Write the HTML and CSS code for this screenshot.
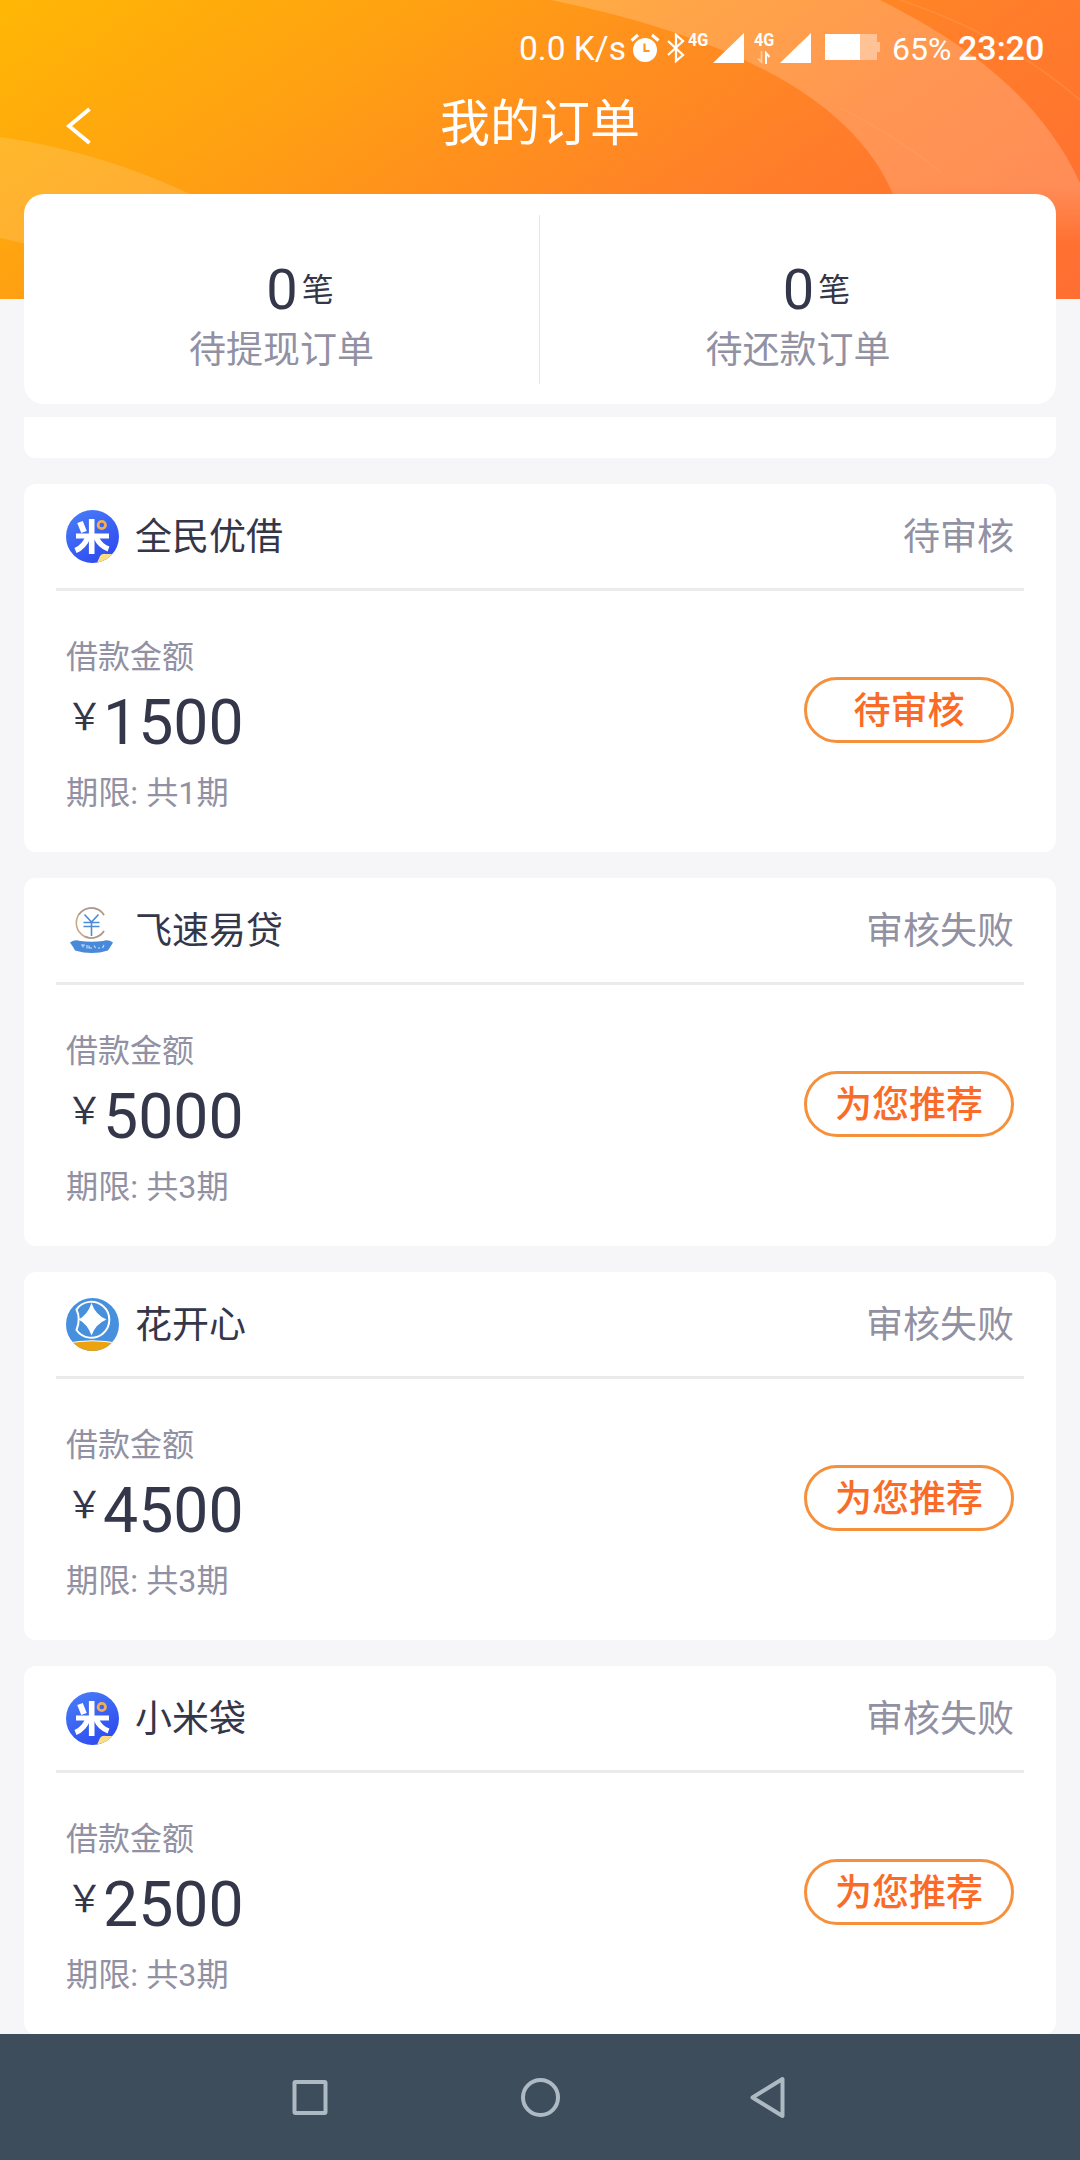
FILE: index.html
```
<!DOCTYPE html>
<html lang="zh-CN">
<head>
<meta charset="utf-8">
<title>我的订单</title>
<link rel="stylesheet" href="styles.css">
</head>
<body>
<svg class="sprite" aria-hidden="true">
  <defs>
    <linearGradient id="mi-blue" x1="0" y1="0" x2="0.6" y2="1">
      <stop offset="0" stop-color="#4a80f8"/><stop offset="1" stop-color="#2f4cf0"/>
    </linearGradient>
    <clipPath id="disc"><circle cx="26.5" cy="26.5" r="26.5"/></clipPath>
    <symbol id="logo-mi" viewBox="0 0 53 53">
      <g clip-path="url(#disc)">
        <rect width="53" height="53" fill="url(#mi-blue)"/>
        <path d="M30 55 34 46Q36 43 40 44L55 44V55Z" fill="#f8de85"/>
        <g fill="none" stroke="#fff">
          <path d="M25.7 9V44" stroke-width="5.6"/>
          <path d="M10 26H43" stroke-width="5"/>
          <path d="M14 12 18 22" stroke-width="6"/>
          <path d="M22 27Q18 37 9.500 40.500M30 27Q34 36 42.500 39" stroke-width="5.400"/>
        </g>
        <circle cx="35.800" cy="15" r="3.700" fill="none" stroke="#efad55" stroke-width="2.800"/>
      </g>
    </symbol>
    <symbol id="logo-fei" viewBox="0 0 53 53">
      <g transform="translate(0 2.500)">
      <path d="M38 8.500A15 15 0 1 0 38 24.500" fill="none" stroke="#c9a888" stroke-width="1.600"/>
      <path d="M13 8A15 15 0 0 1 38 8.500M38 24.500A15 15 0 0 1 19 30" fill="none" stroke="#a99a94" stroke-width="1.400"/>
      <path d="M18.500 8 25.500 15.500 32.500 8M17.500 16H33.500M17.500 20H33.500M25.500 15V29.500" fill="none" stroke="#4b8bd8" stroke-width="1.600"/>
      <path d="M4 36Q9 32.500 14 34.500Q26 36 37 34.500Q42 32.500 47 36Q44 41 42 44Q26 49 9 44Q7 40 4 36Z" fill="#4889d9"/>
      <path d="M15 38.500H19M17 38.500V41M21 38.500V42M23 39V41.500H26M28 39 29.500 41.500M32 41.500H34M36.500 41.500 38 38.500" fill="none" stroke="#cfe2fb" stroke-width="1.100"/>
      </g>
    </symbol>
    <symbol id="logo-hua" viewBox="0 0 53 53">
      <g clip-path="url(#disc)">
        <rect width="53" height="53" fill="#4690de"/>
        <path d="M0 45.500Q26 40 53 45.500V55H0Z" fill="#eba40f" stroke="#fff" stroke-width="1.200"/>
        <path d="M10.500 11.500A18 18 0 1 1 10.500 32Q15 21 10.500 11.500Z" fill="none" stroke="#fff" stroke-width="2"/>
        <path d="M25.500 5Q29.500 17 40.500 21.500Q29.500 26 25.500 37.500Q21.500 26 12.500 21.500Q21.500 17 25.500 5Z" fill="#fff"/>
      </g>
    </symbol>
  </defs>
</svg>
<div class="screen">
  <header class="hero">
    <svg class="hero-art" viewBox="0 0 1080 299" aria-hidden="true">
      <defs>
        <linearGradient id="band" gradientUnits="userSpaceOnUse" x1="0" y1="185" x2="0" y2="245">
          <stop offset="0" stop-color="#fff" stop-opacity=".19"/><stop offset="1" stop-color="#fff" stop-opacity="0"/>
        </linearGradient>
      </defs>
      <path d="M551 0C745 40 855 105 893 194V299H1080V183C1040 95 960 40 880 0Z" fill="url(#band)"/>
      <path d="M900 0Q1005 35 1080 100M840 108Q900 138 940 172" fill="none" stroke="#ffa860" stroke-opacity=".3" stroke-width="1.500"/>
      <path d="M0 137C70 147 135 168 190 194V299C130 280 60 250 0 238Z" fill="#fff" fill-opacity=".14"/>
    </svg>
    <div class="status">
      <span class="speed">0.0 K/s</span>
      <svg class="alarm" viewBox="0 0 30 30"><circle cx="15" cy="17" r="12" fill="#fff"/><path d="M1.500 7.500 8 2M28.500 7.500 22 2" stroke="#fff" stroke-width="3"/><path d="M14.500 10.500V18H19.500" fill="none" stroke="#ff9422" stroke-width="2.200"/></svg>
      <svg class="bluetooth" viewBox="0 0 20 30"><path d="M2 8 17 22 10 28V2L17 8 2 22" fill="none" stroke="#fff" stroke-width="2.300"/></svg>
      <span class="net"><em>4G</em></span>
      <svg class="signal" viewBox="0 0 31 30"><path d="M0 30 31 0V30Z" fill="#fff"/></svg>
      <span class="net net-data"><em>4G</em><svg viewBox="0 0 14 13"><path d="M4.500 0V11L1 7.500" fill="none" stroke="#fff" stroke-opacity=".45" stroke-width="1.800"/><path d="M9 13V2L12.500 6" fill="none" stroke="#fff" stroke-width="2"/></svg></span>
      <svg class="signal" viewBox="0 0 31 30"><path d="M0 30 31 0V30Z" fill="#fff"/></svg>
      <svg class="battery" viewBox="0 0 55 26"><path d="M0 0H52V8H55V18H52V26H0Z" fill="#fff" fill-opacity=".4"/><path d="M0 0H35V26H0Z" fill="#fff"/></svg>
      <span class="percent">65%</span>
      <span class="clock">23:20</span>
    </div>
    <div class="titlebar">
      <svg class="back" viewBox="0 0 26 38"><path d="M23.500 2 3 19 23.500 36" fill="none" stroke="#fff" stroke-width="4"/></svg>
      <h1>我的订单</h1>
    </div>
  </header>
  <section class="summary">
    <div class="stat"><p class="count"><b>0</b><span>笔</span></p><p class="label">待提现订单</p></div>
    <div class="stat"><p class="count"><b>0</b><span>笔</span></p><p class="label">待还款订单</p></div>
  </section>
  <main class="orders">
    <div class="card card-tail"></div>
    <article class="card">
      <div class="head"><svg class="logo"><use href="#logo-mi"/></svg><h2>全民优借</h2><span class="state">待审核</span></div>
      <div class="body"><div class="loan"><p class="small">借款金额</p><p class="amount"><i>￥</i>1500</p><p class="small term">期限: 共1期</p></div><button class="action">待审核</button></div>
    </article>
    <article class="card">
      <div class="head"><svg class="logo"><use href="#logo-fei"/></svg><h2>飞速易贷</h2><span class="state">审核失败</span></div>
      <div class="body"><div class="loan"><p class="small">借款金额</p><p class="amount"><i>￥</i>5000</p><p class="small term">期限: 共3期</p></div><button class="action">为您推荐</button></div>
    </article>
    <article class="card">
      <div class="head"><svg class="logo"><use href="#logo-hua"/></svg><h2>花开心</h2><span class="state">审核失败</span></div>
      <div class="body"><div class="loan"><p class="small">借款金额</p><p class="amount"><i>￥</i>4500</p><p class="small term">期限: 共3期</p></div><button class="action">为您推荐</button></div>
    </article>
    <article class="card">
      <div class="head"><svg class="logo"><use href="#logo-mi"/></svg><h2>小米袋</h2><span class="state">审核失败</span></div>
      <div class="body"><div class="loan"><p class="small">借款金额</p><p class="amount"><i>￥</i>2500</p><p class="small term">期限: 共3期</p></div><button class="action">为您推荐</button></div>
    </article>
  </main>
  <nav class="navbar">
    <svg viewBox="0 0 48 48"><rect x="8.500" y="9" width="31" height="31" rx="1" /></svg>
    <svg viewBox="0 0 48 48"><circle cx="24.500" cy="24.500" r="17.500"/></svg>
    <svg viewBox="0 0 48 48"><path d="M36.500 6V43L6.500 24.500Z"/></svg>
  </nav>
</div>
</body>
</html>
```
FILE: styles.css
```
* { box-sizing: border-box; margin: 0; padding: 0; }
body {
  font-family: Roboto, "Noto Sans CJK SC", sans-serif;
  background: #f6f6f9;
  color: #34364a;
}
h1, h2, b, i, em { font-weight: 400; font-style: normal; }
svg { display: block; flex: none; }
.sprite { position: absolute; width: 0; height: 0; }
.screen { width: 1080px; height: 2160px; display: flex; flex-direction: column; overflow: hidden; }

.hero {
  position: relative;
  flex: none;
  height: 299px;
  background: linear-gradient(146deg, #ffb704 0%, #ffa112 29%, #ff931b 43%, #ff7e2a 67%, #ff7230 88%, #ff6f33 100%);
  color: #fff;
}
.hero-art { position: absolute; inset: 0; width: 1080px; height: 299px; }
.status {
  position: relative;
  display: flex;
  align-items: flex-start;
  height: 86px;
  padding: 33px 0 0 519px;
  line-height: 30px;
  white-space: nowrap;
}
.speed { width: 111px; font-size: 33.5px; line-height: 32px; }
.alarm { width: 30px; height: 30px; }
.bluetooth { width: 20px; height: 30px; margin-left: 6px; }
.net { width: 21px; margin-left: 2px; font-size: 19px; line-height: 14px; }
.net em { display: block; font-weight: 700; transform: scaleX(.85); transform-origin: 0 0; }
.signal { width: 31px; height: 30px; margin-left: 4px; }
.net-data { margin-left: 10px; }
.net-data svg { width: 14px; height: 13px; margin: 4px 0 0 3px; }
.net-data + .signal { margin-left: 5px; }
.battery { width: 55px; height: 26px; margin: 1px 0 0 14px; }
.percent { width: 66px; margin-left: 12px; font-size: 32px; line-height: 32px; }
.clock { font-size: 34px; font-weight: 500; }
.titlebar {
  position: relative;
  display: grid;
  grid-template-columns: 66px 1fr 66px;
  align-items: center;
  height: 76px;
}
.back { width: 26px; height: 38px; grid-column: 2; grid-row: 1; margin-top: 4px; }
h1 { grid-column: 2; grid-row: 1; font-size: 50px; line-height: 70px; text-align: center; }

.summary {
  position: relative;
  flex: none;
  display: grid;
  grid-template-columns: 1fr 1fr;
  height: 210px;
  margin: -105px 24px 0;
  padding: 21px 0 20px;
  border-radius: 20px;
  background: #fff;
}
.stat { padding-top: 42px; text-align: center; }
.stat:first-child { border-right: 1px solid #e6e6ea; }
.count { display: flex; justify-content: center; align-items: center; gap: 4px; height: 66px; padding-left: 37px; font-size: 32px; line-height: 66px; }
.count b { font-size: 56px; }
.label { margin-top: 3px; font-size: 37px; line-height: 50px; color: #9191a3; }

.orders { flex: 1; display: flex; flex-direction: column; gap: 26px; padding: 13px 24px 0; }
.card { flex: none; height: 368px; border-radius: 12px; background: #fff; }
.card-tail { height: 41px; border-radius: 0 0 12px 12px; }
.head {
  display: flex;
  align-items: center;
  height: 107px;
  margin: 0 32px;
  padding: 0 10px;
  border-bottom: 3px solid #ebebed;
}
.logo { width: 53px; height: 53px; margin-top: 1px; }
h2, .state { padding-bottom: 5px; font-size: 37px; }
h2 { margin-left: 16px; }
.state { margin-left: auto; color: #9191a3; }
.body { display: flex; justify-content: space-between; padding: 44px 42px 0; }
.small { font-size: 32px; line-height: 44px; color: #9191a3; }
.amount { display: flex; height: 84px; font-size: 62.5px; line-height: 88px; }
.amount i { margin-top: -5px; font-size: 37px; }
.term { margin-top: 8px; font-size: 32.2px; }
.action {
  width: 210px;
  height: 66px;
  margin-top: 42px;
  padding-top: 4px;
  border: 3px solid #f6903c;
  border-radius: 33px;
  background: #fff;
  color: #fb6b28;
  font: 500 37px/56px Roboto, "Noto Sans CJK SC", sans-serif;
}

.navbar {
  position: relative;
  flex: none;
  display: flex;
  align-items: center;
  justify-content: center;
  gap: 182px;
  height: 126px;
  background: #3d4d5b;
}
.navbar svg { width: 48px; height: 48px; fill: none; stroke: #adb9c3; stroke-width: 4; stroke-linejoin: round; }
```
